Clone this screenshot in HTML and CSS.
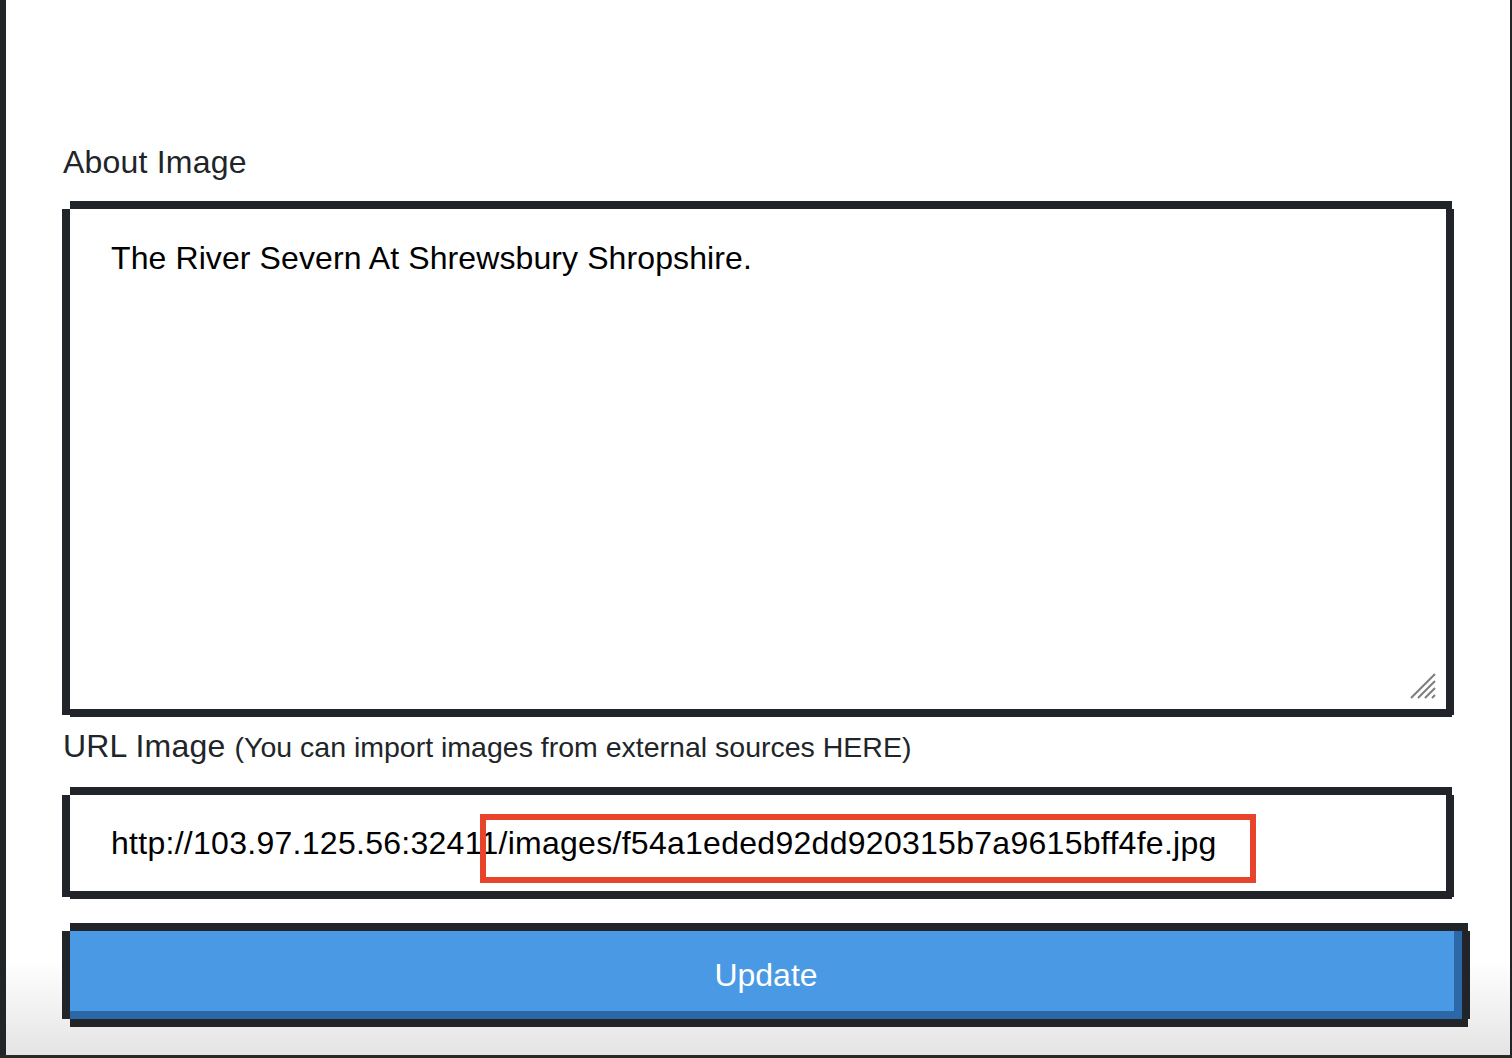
FILE: index.html
```html
<!DOCTYPE html>
<html lang="en">
<head>
<meta charset="utf-8">
<title>Edit Image</title>
<link rel="stylesheet" href="styles.css">
</head>
<body>
<div class="modal">
  <form class="form">
    <label class="label" for="about">About Image</label>
    <div class="area-wrap">
      <textarea id="about" class="pixel-box area">The River Severn At Shrewsbury Shropshire.</textarea>
      <svg class="resizer" width="26" height="26" viewBox="0 0 26 26" aria-hidden="true">
        <path d="M1 25 L25 1 M8 25 L25 8 M15 25 L25 15 M22 25 L25 22" stroke="#7d7d7d" stroke-width="2" fill="none"/>
      </svg>
    </div>
    <label class="label label-url" for="url">URL Image <span class="hint">(You can import images from external sources HERE)</span></label>
    <div class="input-wrap">
      <input id="url" class="pixel-box input" type="text" value="http://103.97.125.56:32411/images/f54a1eded92dd920315b7a9615bff4fe.jpg">
      <div class="highlight"></div>
    </div>
    <button type="button" class="btn">Update</button>
  </form>
</div>
<div class="bottom-strip"></div>
</body>
</html>
```
FILE: styles.css
```css
html, body {
  margin: 0;
  padding: 0;
}
body {
  background: #212529;
  height: 1058px;
  overflow: hidden;
  font-family: "Liberation Sans", Arial, sans-serif;
}
.modal {
  margin: 0 2px 0 6px;
  height: 1055px;
  background: linear-gradient(to bottom, #ffffff 0, #ffffff 960px, #e4e4e4 1055px);
}
.bottom-strip {
  height: 3px;
  background: #2b2a22;
}
.form {
  padding: 138px 0 0 56px;
  display: flex;
  flex-direction: column;
  align-items: flex-start;
}
.label {
  display: block;
  font-size: 32px;
  line-height: 48px;
  color: #212529;
  padding-left: 1px;
  letter-spacing: 0.2px;
}
.hint {
  font-size: 28.5px;
  letter-spacing: 0;
}
.pixel-box {
  --px: #212529;
  box-sizing: border-box;
  border: none;
  outline: none;
  background: #fff;
  color: #000;
  font-family: "Liberation Sans", Arial, sans-serif;
  font-size: 32px;
  box-shadow:
    0 -8px 0 var(--px),
    6px -8px 0 var(--px),
    0 8px 0 var(--px),
    6px 8px 0 var(--px),
    -8px 0 0 var(--px),
    -8px 6px 0 var(--px),
    8px 0 0 var(--px),
    8px 6px 0 var(--px);
}
.area-wrap {
  position: relative;
  margin: 23px 0 0 8px;
}
.area {
  display: block;
  width: 1376px;
  height: 500px;
  padding: 25px 41px;
  line-height: 48px;
  letter-spacing: 0.1px;
  resize: none;
  overflow: hidden;
}
.resizer {
  position: absolute;
  right: 10px;
  bottom: 10px;
}
.label-url {
  margin-top: 13px;
}
.input-wrap {
  position: relative;
  margin: 24px 0 0 8px;
}
.input {
  display: block;
  width: 1376px;
  height: 96px;
  padding: 0 41px;
  letter-spacing: 0.28px;
}
.highlight {
  position: absolute;
  left: 410px;
  top: 19px;
  width: 764px;
  height: 57px;
  border: 6px solid #e8432b;
  pointer-events: none;
}
.btn {
  margin: 40px 0 0 8px;
  width: 1392px;
  height: 88px;
  border: none;
  padding: 0;
  background: #4a99e4;
  color: #fff;
  font-family: "Liberation Sans", Arial, sans-serif;
  font-size: 32px;
  cursor: pointer;
  box-shadow:
    inset -8px -8px 0 #2c68a8,
    0 -8px 0 #212529,
    6px -8px 0 #212529,
    0 8px 0 #212529,
    6px 8px 0 #212529,
    -8px 0 0 #212529,
    8px 0 0 #212529;
}
```
